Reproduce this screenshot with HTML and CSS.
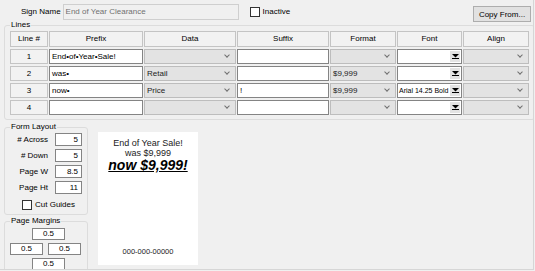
FILE: index.html
```html
<!DOCTYPE html>
<html lang="en">
<head>
  <meta charset="UTF-8">
  <title>Sign Layout</title>
  <link rel="stylesheet" href="styles.css">
</head>
<body>
  <div class="window">
    <div class="top-row">
      <span class="sign-label">Sign Name</span>
      <div class="sign-name">End of Year Clearance</div>
      <span class="check inactive-check"></span>
      <span class="check-label">Inactive</span>
      <button class="btn">Copy From...</button>
    </div>

    <fieldset class="group lines">
      <legend>Lines</legend>
      <div class="grid">
        <div class="hd">Line #</div>
        <div class="hd">Prefix</div>
        <div class="hd">Data</div>
        <div class="hd">Suffix</div>
        <div class="hd">Format</div>
        <div class="hd">Font</div>
        <div class="hd">Align</div>

        <div class="rh">1</div>
        <div class="tx">End&#8226;of&#8226;Year&#8226;Sale!</div>
        <div class="cb"></div>
        <div class="tx"></div>
        <div class="cb"></div>
        <div class="fc"><span class="fc-text"></span><span class="drop"><svg width="7" height="5" viewBox="0 0 7 5"><polygon points="0,0 7,0 3.5,3.5" fill="#000"/><rect x="0" y="4" width="7" height="1" fill="#000"/></svg></span></div>
        <div class="cb"></div>

        <div class="rh">2</div>
        <div class="tx">was&#8226;</div>
        <div class="cb">Retail</div>
        <div class="tx"></div>
        <div class="cb">$9,999</div>
        <div class="fc"><span class="fc-text"></span><span class="drop"><svg width="7" height="5" viewBox="0 0 7 5"><polygon points="0,0 7,0 3.5,3.5" fill="#000"/><rect x="0" y="4" width="7" height="1" fill="#000"/></svg></span></div>
        <div class="cb"></div>

        <div class="rh">3</div>
        <div class="tx">now&#8226;</div>
        <div class="cb">Price</div>
        <div class="tx">!</div>
        <div class="cb">$9,999</div>
        <div class="fc"><span class="fc-text">Arial 14.25 Bold</span><span class="drop"><svg width="7" height="5" viewBox="0 0 7 5"><polygon points="0,0 7,0 3.5,3.5" fill="#000"/><rect x="0" y="4" width="7" height="1" fill="#000"/></svg></span></div>
        <div class="cb"></div>

        <div class="rh">4</div>
        <div class="tx"></div>
        <div class="cb"></div>
        <div class="tx"></div>
        <div class="cb"></div>
        <div class="fc"><span class="fc-text"></span><span class="drop"><svg width="7" height="5" viewBox="0 0 7 5"><polygon points="0,0 7,0 3.5,3.5" fill="#000"/><rect x="0" y="4" width="7" height="1" fill="#000"/></svg></span></div>
        <div class="cb"></div>
      </div>
    </fieldset>

    <div class="lower">
      <div class="left-col">
        <fieldset class="group form-layout">
          <legend>Form Layout</legend>
          <div class="field-row"><span class="field-label"># Across</span><div class="num">5</div></div>
          <div class="field-row"><span class="field-label"># Down</span><div class="num">5</div></div>
          <div class="field-row"><span class="field-label">Page W</span><div class="num">8.5</div></div>
          <div class="field-row"><span class="field-label">Page Ht</span><div class="num">11</div></div>
          <div class="cut-row"><span class="check"></span><span class="check-label">Cut Guides</span></div>
        </fieldset>

        <fieldset class="group margins">
          <legend>Page Margins</legend>
          <div class="margin-top"><div class="mbox">0.5</div></div>
          <div class="margin-mid"><div class="mbox">0.5</div><div class="mbox">0.5</div></div>
          <div class="margin-top"><div class="mbox">0.5</div></div>
        </fieldset>
      </div>

      <div class="paper">
        <div class="p-line1">End of Year Sale!</div>
        <div class="p-line2">was $9,999</div>
        <div class="p-line3">now $9,999!</div>
        <div class="p-foot">000-000-00000</div>
      </div>
    </div>
  </div>
</body>
</html>
```

FILE: styles.css
```css
* {
  box-sizing: border-box;
}

body {
  margin: 0;
  background: #f0f0f0;
  font-family: "Liberation Sans", Arial, sans-serif;
  font-size: 8px;
  color: #000;
  overflow: hidden;
}

.window {
  width: 534px;
  height: 270px;
  border-right: 1px solid #d6d6d6;
  border-bottom: 1px solid #d6d6d6;
  background: #f0f0f0;
  overflow: hidden;
}

/* top row */
.top-row {
  display: flex;
  align-items: flex-start;
  height: 20px;
  padding-top: 4px;
}

.sign-label {
  margin-left: 21px;
  line-height: 16px;
}

.sign-name {
  margin-left: 2px;
  width: 176px;
  height: 16px;
  border: 1px solid #cfcfcf;
  color: #707070;
  padding-left: 2px;
  line-height: 14px;
}

.check {
  display: inline-block;
  width: 10px;
  height: 10px;
  border: 1px solid #333;
  background: #fff;
}

.inactive-check {
  margin-left: 11px;
  margin-top: 3px;
}

.check-label {
  margin-left: 3px;
  line-height: 16px;
}

.btn {
  margin-left: auto;
  margin-right: 2px;
  margin-top: 2px;
  width: 58px;
  height: 16px;
  padding: 0;
  background: #e1e1e1;
  border: 1px solid #adadad;
  font-family: inherit;
  font-size: 8px;
  color: #000;
}

/* group boxes */
.group {
  margin: 0;
  border: 1px solid #dcdcdc;
  border-radius: 3px;
}

.group legend {
  padding: 0 1px;
  line-height: 10px;
}

.lines {
  margin: 0 2px 0 4px;
  padding: 1px 5px 4px 5px;
}

/* lines grid */
.grid {
  display: grid;
  grid-template-columns: 38px 94px 92px 92px 66px 65px 66px;
  grid-template-rows: 16px repeat(4, 15px);
  column-gap: 1px;
  row-gap: 2px;
}

.hd,
.rh {
  background: #f2f2f2;
  border: 1px solid #c4c4c4;
  text-align: center;
  line-height: 13px;
}

.hd {
  line-height: 14px;
}

.tx {
  background: #fff;
  border: 1px solid #848484;
  padding-left: 2px;
  line-height: 13px;
  white-space: nowrap;
  overflow: hidden;
}

.cb {
  position: relative;
  background: #e3e3e3;
  border: 1px solid #bdbdbd;
  padding-left: 2px;
  line-height: 13px;
  color: #222;
}

.cb::after {
  content: "";
  position: absolute;
  right: 6px;
  top: 3px;
  width: 3px;
  height: 3px;
  border-right: 1px solid #707070;
  border-bottom: 1px solid #707070;
  transform: rotate(45deg);
}

.fc {
  display: flex;
  align-items: center;
  background: #fff;
  border: 1px solid #848484;
}

.fc-text {
  flex: 1;
  padding-left: 1px;
  font-size: 7px;
  white-space: nowrap;
}

.drop {
  display: flex;
  align-items: center;
  justify-content: center;
  width: 10px;
  height: 11px;
  margin-right: 1px;
  background: #e3e3e3;
}

/* lower area */
.lower {
  display: flex;
  align-items: flex-start;
  margin-top: 2px;
}

.left-col {
  margin-left: 4px;
  width: 84px;
}

.form-layout {
  padding: 1px 5px 1px 5px;
}

.field-row {
  display: flex;
  align-items: center;
  margin-bottom: 3px;
}

.field-label {
  width: 38px;
  text-align: right;
}

.num {
  margin-left: 7px;
  width: 27px;
  height: 13px;
  border: 1px solid #848484;
  background: #fff;
  text-align: right;
  padding-right: 3px;
  line-height: 11px;
}

.cut-row {
  display: flex;
  align-items: center;
  margin-top: 2px;
  padding-left: 12px;
}

.margins {
  margin-top: 1px;
  padding: 2px 5px 0 5px;
  height: 70px;
}

.margin-top {
  padding-left: 22px;
}

.margin-mid {
  display: flex;
  gap: 5px;
  margin: 3px 0 3px 0;
}

.mbox {
  width: 33px;
  height: 12px;
  border: 1px solid #848484;
  background: #fff;
  text-align: center;
  line-height: 10px;
}

/* preview paper */
.paper {
  display: flex;
  flex-direction: column;
  align-items: center;
  margin-left: 10px;
  margin-top: 10px;
  width: 100px;
  height: 133px;
  background: #fff;
  padding-top: 6px;
  color: #222;
}

.p-line1,
.p-line2 {
  font-size: 9px;
  line-height: 10px;
}

.p-line3 {
  font-size: 14px;
  line-height: 15px;
  font-weight: bold;
  font-style: italic;
  text-decoration: underline;
  color: #000;
}

.p-foot {
  margin-top: auto;
  margin-bottom: 9px;
  font-size: 7.5px;
}
```
